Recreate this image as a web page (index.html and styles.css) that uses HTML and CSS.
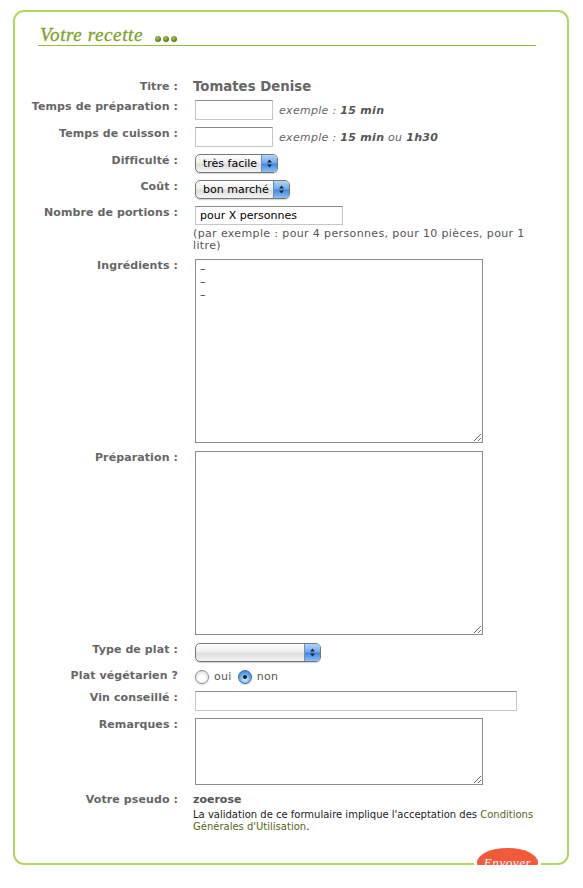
FILE: index.html
```html
<!DOCTYPE html>
<html lang="fr">
<head>
<meta charset="utf-8">
<title>Votre recette</title>
<link rel="stylesheet" href="styles.css">
</head>
<body>
<div class="frame">
  <div class="head">
    <h1 class="head-title">Votre recette</h1>
    <span class="dots"><i></i><i></i><i></i></span>
  </div>
  <div class="form">
    <div class="row row-title">
      <div class="lab">Titre :</div>
      <div class="val"><span class="recipe">Tomates Denise</span></div>
    </div>
    <div class="row">
      <div class="lab">Temps de préparation :</div>
      <div class="val"><input class="inp inp-s" type="text"><span class="ex">exemple : <b>15 min</b></span></div>
    </div>
    <div class="row">
      <div class="lab">Temps de cuisson :</div>
      <div class="val"><input class="inp inp-s" type="text"><span class="ex">exemple : <b>15 min</b> ou <b>1h30</b></span></div>
    </div>
    <div class="row">
      <div class="lab">Difficulté :</div>
      <div class="val">
        <div class="sel sel-diff"><span class="sel-text">très facile</span><span class="sel-btn"><svg width="5" height="9" viewBox="0 0 5 9"><path d="M2.5 0.5L5 3.5H0Z M2.5 8.5L5 5.5H0Z" fill="#1c2433"/></svg></span></div>
      </div>
    </div>
    <div class="row">
      <div class="lab">Coût :</div>
      <div class="val">
        <div class="sel sel-cout"><span class="sel-text">bon marché</span><span class="sel-btn"><svg width="5" height="9" viewBox="0 0 5 9"><path d="M2.5 0.5L5 3.5H0Z M2.5 8.5L5 5.5H0Z" fill="#1c2433"/></svg></span></div>
      </div>
    </div>
    <div class="row">
      <div class="lab">Nombre de portions :</div>
      <div class="val">
        <input class="inp inp-m" type="text" value="pour X personnes">
        <p class="hint">(par exemple : pour 4 personnes, pour 10 pièces, pour 1 litre)</p>
      </div>
    </div>
    <div class="row row-big">
      <div class="lab">Ingrédients :</div>
      <div class="val"><textarea class="ta ta-big">–
–
–</textarea></div>
    </div>
    <div class="row row-big">
      <div class="lab">Préparation :</div>
      <div class="val"><textarea class="ta ta-big"></textarea></div>
    </div>
    <div class="row">
      <div class="lab">Type de plat :</div>
      <div class="val">
        <div class="sel sel-type"><span class="sel-text"></span><span class="sel-btn"><svg width="5" height="9" viewBox="0 0 5 9"><path d="M2.5 0.5L5 3.5H0Z M2.5 8.5L5 5.5H0Z" fill="#1c2433"/></svg></span></div>
      </div>
    </div>
    <div class="row row-radio">
      <div class="lab">Plat végétarien ?</div>
      <div class="val radios">
        <span class="radio"></span><span class="radio-lab">oui</span>
        <span class="radio radio-on"><i></i></span><span class="radio-lab">non</span>
      </div>
    </div>
    <div class="row">
      <div class="lab">Vin conseillé :</div>
      <div class="val"><input class="inp inp-l" type="text"></div>
    </div>
    <div class="row row-rem">
      <div class="lab">Remarques :</div>
      <div class="val"><textarea class="ta ta-small"></textarea></div>
    </div>
    <div class="row row-last">
      <div class="lab">Votre pseudo :</div>
      <div class="val">
        <span class="pseudo">zoerose</span>
        <p class="legal"><span class="legal-line">La validation de ce formulaire implique l'acceptation des <a class="cgu" href="#">Conditions</a></span><span class="legal-line"><a class="cgu" href="#">Générales d'Utilisation</a>.</span></p>
      </div>
    </div>
  </div>
  <button class="send" type="button"><span class="send-label">Envoyer</span></button>
</div>
</body>
</html>
```

FILE: styles.css
```css
html, body {
  margin: 0;
  background: #fff;
}
body {
  font-family: "DejaVu Sans", Verdana, sans-serif;
  font-size: 11px;
  color: #333;
}
.frame {
  position: relative;
  margin: 10px 0 0 13px;
  width: 552px;
  border: 2px solid #b2d661;
  border-radius: 11px;
  padding-bottom: 30px;
}
.head {
  margin: 0 31px 0 23px;
  padding-top: 12px;
  border-bottom: 1px solid #95c03c;
  display: flex;
  align-items: flex-end;
}
.head-title {
  margin: 0;
  padding-left: 2px;
  font-family: "Liberation Serif", "Times New Roman", serif;
  font-style: italic;
  font-weight: normal;
  font-size: 19px;
  line-height: 21px;
  letter-spacing: 0.6px;
  color: #7aa326;
  -webkit-text-stroke: 0.3px #7aa326;
}
.dots {
  display: flex;
  gap: 2px;
  margin: 0 0 3px 12px;
}
.dots i {
  display: block;
  width: 6px;
  height: 6px;
  border-radius: 50%;
  background: radial-gradient(circle at 40% 35%, #a6cf55, #4f6e14 75%);
}
.form {
  margin-top: 32px;
  padding-right: 29px;
}
.row {
  display: grid;
  grid-template-columns: 163px 1fr;
  column-gap: 15px;
  align-items: start;
  margin-bottom: 7px;
}
.row-title { margin-bottom: 5px; }
.row-big { margin-bottom: 8px; }
.row-rem { margin-bottom: 8px; }
.row-last { margin-bottom: 0; }
.lab {
  text-align: right;
  font-weight: bold;
  color: #666;
  line-height: 13px;
  letter-spacing: 0.1px;
}
.row-title .lab { padding-top: 2px; }
.val {
  min-width: 0;
  display: flex;
  flex-wrap: wrap;
  align-items: center;
}
.recipe {
  font-size: 13.3px;
  font-weight: bold;
  line-height: 17px;
  color: #666;
}
.inp {
  box-sizing: border-box;
  height: 20px;
  margin: 0 0 0 2px;
  padding: 0 4px;
  border: 1px solid #c6c6c6;
  border-top-color: #8c8c8c;
  font-family: "DejaVu Sans", Verdana, sans-serif;
  font-size: 11px;
  color: #000;
  background: #fff;
  outline: none;
}
.inp-s { width: 78px; }
.inp-m { width: 148px; height: 19px; }
.inp-l { width: 322px; }
.ex {
  margin-left: 6px;
  font-style: italic;
  color: #666;
  letter-spacing: 0.3px;
}
.ex b { color: #555; }
.hint {
  margin: 3px 0 0;
  width: 100%;
  line-height: 12px;
  color: #555;
  letter-spacing: 0.37px;
}
.sel {
  box-sizing: border-box;
  display: flex;
  height: 19px;
  margin-left: 2px;
  border: 1px solid #777;
  border-radius: 5px;
  overflow: hidden;
  background: linear-gradient(#ffffff, #eeeeee 45%, #dddddd 55%, #f4f4f4);
  box-shadow: 0 1px 1px rgba(0, 0, 0, 0.18);
}
.sel-diff { width: 83px; }
.sel-cout { width: 95px; }
.sel-type { width: 126px; }
.sel-text {
  flex: 1;
  padding-left: 7px;
  line-height: 17px;
  color: #000;
  white-space: nowrap;
}
.sel-btn {
  width: 15px;
  border-left: 1px solid #6b8fc2;
  background: linear-gradient(#b3d4f7, #6fa9ec 48%, #3f86e0 52%, #8cc0f5);
  display: flex;
  align-items: center;
  justify-content: center;
}
.ta {
  box-sizing: border-box;
  display: block;
  width: 288px;
  margin: 0 0 0 2px;
  padding: 2px 4px;
  border: 1px solid #8d8d8d;
  font-family: "DejaVu Sans", Verdana, sans-serif;
  font-size: 11px;
  line-height: 13px;
  color: #333;
  background: #fff;
  outline: none;
}
.ta-big { height: 184px; }
.ta-small { height: 67px; }
.radios { height: 15px; padding-left: 2px; }
.radio {
  box-sizing: border-box;
  width: 14px;
  height: 14px;
  border-radius: 50%;
  border: 1px solid #8a8a8a;
  background: radial-gradient(circle at 50% 70%, #ffffff 30%, #e4e4e4 80%);
  box-shadow: 0 1px 1px rgba(0, 0, 0, 0.15);
  display: flex;
  align-items: center;
  justify-content: center;
}
.radio-on {
  border-color: #3c68a8;
  background: radial-gradient(circle at 50% 70%, #bfe0ff 10%, #5b9fe9 60%, #3b7bd3 95%);
}
.radio-on i {
  display: block;
  width: 4px;
  height: 4px;
  border-radius: 50%;
  background: #15202e;
}
.radio-lab {
  margin: 0 6px 0 5px;
  color: #555;
  letter-spacing: 0.3px;
}
.pseudo {
  font-weight: bold;
  color: #555;
  line-height: 13px;
}
.legal {
  margin: 3px 0 0;
  width: 100%;
  font-size: 10px;
  line-height: 12px;
  color: #222;
}
.legal-line {
  display: block;
  white-space: nowrap;
}
.cgu {
  color: #56661c;
  text-decoration: none;
}
.send {
  position: absolute;
  right: 29px;
  bottom: -14px;
  width: 61px;
  height: 29px;
  padding: 0;
  border: none;
  border-radius: 50%;
  background: #f25a3c;
  box-shadow: 0 0 0 3px #fff;
  display: flex;
  align-items: center;
  justify-content: center;
  cursor: pointer;
}
.send-label {
  color: #fff;
  font-family: "Liberation Serif", "Times New Roman", serif;
  font-style: italic;
  font-size: 13px;
  line-height: 15px;
  letter-spacing: 0.6px;
}
```
